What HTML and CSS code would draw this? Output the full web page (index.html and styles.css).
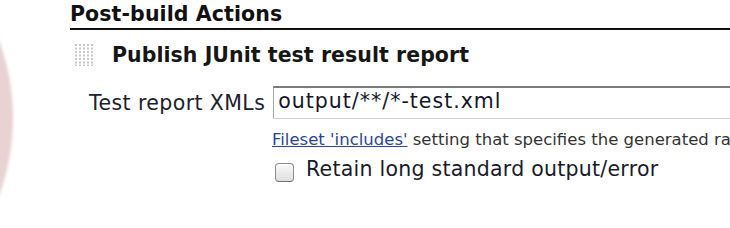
FILE: index.html
```
<!DOCTYPE html>
<html>
<head>
<meta charset="utf-8">
<link rel="stylesheet" href="styles.css">
</head>
<body>
<div class="watermark-clip"><div class="watermark"></div></div>
<div class="page">
  <div class="section-header">Post-build Actions</div>
  <div class="action-row">
    <svg class="grip" width="19" height="22" viewBox="0 0 19 22">
      <g fill="#c8c8c8">
        <rect x="0" y="0" width="2" height="2"/><rect x="4" y="0" width="2" height="2"/><rect x="8" y="0" width="2" height="2"/><rect x="12" y="0" width="2" height="2"/><rect x="16" y="0" width="2" height="2"/>
        <rect x="0" y="3.5" width="2" height="2"/><rect x="4" y="3.5" width="2" height="2"/><rect x="8" y="3.5" width="2" height="2"/><rect x="12" y="3.5" width="2" height="2"/><rect x="16" y="3.5" width="2" height="2"/>
        <rect x="0" y="7" width="2" height="2"/><rect x="4" y="7" width="2" height="2"/><rect x="8" y="7" width="2" height="2"/><rect x="12" y="7" width="2" height="2"/><rect x="16" y="7" width="2" height="2"/>
        <rect x="0" y="10.5" width="2" height="2"/><rect x="4" y="10.5" width="2" height="2"/><rect x="8" y="10.5" width="2" height="2"/><rect x="12" y="10.5" width="2" height="2"/><rect x="16" y="10.5" width="2" height="2"/>
        <rect x="0" y="14" width="2" height="2"/><rect x="4" y="14" width="2" height="2"/><rect x="8" y="14" width="2" height="2"/><rect x="12" y="14" width="2" height="2"/><rect x="16" y="14" width="2" height="2"/>
        <rect x="0" y="17.5" width="2" height="2"/><rect x="4" y="17.5" width="2" height="2"/><rect x="8" y="17.5" width="2" height="2"/><rect x="12" y="17.5" width="2" height="2"/><rect x="16" y="17.5" width="2" height="2"/>
        <rect x="0" y="20.5" width="2" height="1.5"/><rect x="4" y="20.5" width="2" height="1.5"/><rect x="8" y="20.5" width="2" height="1.5"/><rect x="12" y="20.5" width="2" height="1.5"/><rect x="16" y="20.5" width="2" height="1.5"/>
      </g>
    </svg>
    <span class="action-title">Publish JUnit test result report</span>
  </div>
  <div class="field-row">
    <label class="field-label">Test report XMLs</label>
    <input class="text-input" type="text" value="output/**/*-test.xml">
  </div>
  <div class="help-row"><a class="help-link" href="#">Fileset 'includes'</a> setting that specifies the generated raw XML report files.</div>
  <div class="check-row">
    <span class="checkbox"></span>
    <span class="check-label">Retain long standard output/error</span>
  </div>
</div>
</body>
</html>
```
FILE: styles.css
```
html, body {
  margin: 0;
  padding: 0;
  width: 730px;
  height: 228px;
  overflow: hidden;
  background: #fff;
}
body {
  position: relative;
  font-family: "DejaVu Sans", Verdana, sans-serif;
  color: #1a1a1a;
}
.watermark-clip {
  position: absolute;
  left: 0;
  top: 0;
  width: 30px;
  height: 228px;
  overflow: hidden;
}
.watermark {
  position: absolute;
  left: -433px;
  top: -105px;
  width: 446px;
  height: 446px;
  border-radius: 50%;
  background: radial-gradient(circle, #ecd2d2 0, #e6d2d2 93.5%, #d7d6d6 96%, #d4d4d4 98.8%, rgba(212,212,212,0) 100%);
  filter: blur(1.5px);
}
.page {
  position: relative;
  white-space: nowrap;
  width: 730px;
  overflow: hidden;
}
.section-header {
  margin-left: 70px;
  padding-top: 2px;
  padding-bottom: 2px;
  font-size: 20.5px;
  line-height: 24px;
  font-weight: bold;
  letter-spacing: 0.1px;
  color: #111;
  border-bottom: 2px solid #111;
}
.action-row {
  display: flex;
  align-items: center;
  gap: 18px;
  margin-left: 75px;
  padding-top: 13px;
}
.grip {
  flex: none;
}
.action-title {
  font-size: 20.5px;
  line-height: 24px;
  font-weight: bold;
  letter-spacing: 0.05px;
  color: #161616;
}
.field-row {
  display: flex;
  align-items: center;
  gap: 8px;
  margin-left: 89px;
  margin-top: 19px;
}
.field-label {
  font-size: 20.5px;
  line-height: 24px;
  letter-spacing: 0.4px;
  color: #20202c;
}
.text-input {
  flex: none;
  width: 600px;
  height: 33px;
  box-sizing: border-box;
  margin: 0;
  padding: 0 0 5px 4px;
  font-family: "DejaVu Sans", Verdana, sans-serif;
  font-size: 20.5px;
  letter-spacing: 1px;
  color: #15152a;
  background: #fff;
  border-style: solid;
  border-width: 2px 1px 1px 1px;
  border-color: #7a7a7a #a8a8a8 #d0d0d0 #a8a8a8;
  outline: none;
}
.help-row {
  margin-left: 272px;
  margin-top: 11px;
  font-size: 16.5px;
  line-height: 20px;
  color: #333;
}
.help-link {
  color: #2c4592;
  text-decoration: underline;
}
.check-row {
  display: flex;
  align-items: flex-start;
  gap: 12px;
  margin-left: 275px;
  margin-top: 7px;
}
.checkbox {
  flex: none;
  width: 17px;
  height: 17px;
  margin-top: 6px;
  border: 1.5px solid #8c8c8c;
  border-bottom-color: #707070;
  border-radius: 4px;
  background: linear-gradient(#fafafa, #dedede);
  box-shadow: inset 0 1px 0 #fff;
}
.check-label {
  font-size: 20.5px;
  line-height: 24px;
  letter-spacing: 0.25px;
  color: #1a1a2a;
}
```
